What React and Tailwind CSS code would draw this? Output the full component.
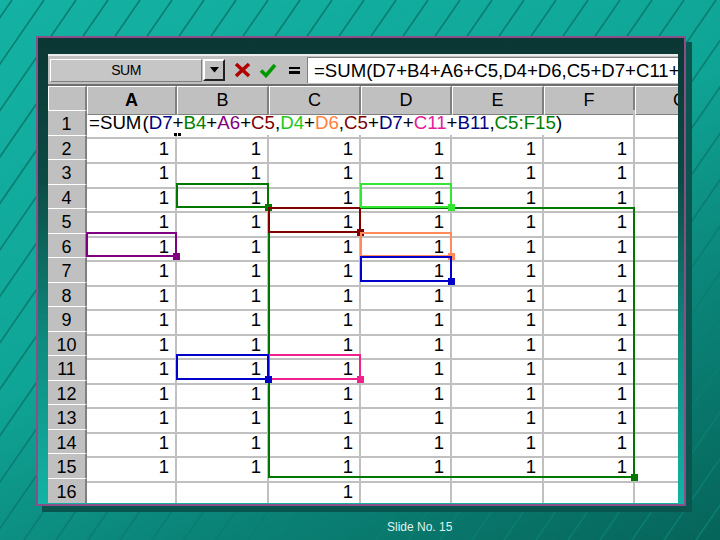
import React from "react";

const colLeft = [0, 39, 129, 221, 313, 404, 496, 587, 678];
const rowTop = (r) => 56 + (r - 1) * 24.5;

const segs = [
  ["=SUM", "text-black"],
  ["CURSOR", ""],
  ["(", "text-black"],
  ["D7", "text-[#000080]"],
  ["+", "text-black"],
  ["B4", "text-[#008000]"],
  ["+", "text-black"],
  ["A6", "text-[#800080]"],
  ["+", "text-black"],
  ["C5", "text-[#800000]"],
  [",", "text-black"],
  ["D4", "text-[#22c822]"],
  ["+", "text-black"],
  ["D6", "text-[#ff8040]"],
  [",", "text-black"],
  ["C5", "text-[#800000]"],
  ["+", "text-black"],
  ["D7", "text-[#000080]"],
  ["+", "text-black"],
  ["C11", "text-[#e0209a]"],
  ["+", "text-black"],
  ["B11", "text-[#000080]"],
  [",", "text-black"],
  ["C5:F15", "text-[#008000]"],
  [")", "text-black"],
];

const boxes = [
  { c1: 3, r1: 5, c2: 6, r2: 15, border: "border-[#007800]", fill: "bg-[#007800]" },
  { c1: 2, r1: 4, c2: 2, r2: 4, border: "border-[#007800]", fill: "bg-[#007800]" },
  { c1: 1, r1: 6, c2: 1, r2: 6, border: "border-[#800080]", fill: "bg-[#800080]" },
  { c1: 3, r1: 5, c2: 3, r2: 5, border: "border-[#800000]", fill: "bg-[#800000]" },
  { c1: 4, r1: 4, c2: 4, r2: 4, border: "border-[#33e633]", fill: "bg-[#33e633]" },
  { c1: 4, r1: 6, c2: 4, r2: 6, border: "border-[#ff8a5c]", fill: "bg-[#ff8a5c]" },
  { c1: 4, r1: 7, c2: 4, r2: 7, border: "border-[#0000c8]", fill: "bg-[#0000c8]" },
  { c1: 3, r1: 11, c2: 3, r2: 11, border: "border-[#f0208c]", fill: "bg-[#f0208c]" },
  { c1: 2, r1: 11, c2: 2, r2: 11, border: "border-[#0000c8]", fill: "bg-[#0000c8]" },
];

function RangeBox({ c1, r1, c2, r2, border, fill }) {
  const left = colLeft[c1] - 1;
  const top = rowTop(r1) - 1;
  const right = colLeft[c2 + 1] - 1;
  const bottom = rowTop(r2 + 1) - 1;
  return (
    <>
      <div
        className={`absolute border-2 pointer-events-none ${border}`}
        style={{ left, top, width: right - left + 1, height: bottom - top + 1 }}
      />
      <div
        className={`absolute w-[7px] h-[7px] ${fill}`}
        style={{ left: right - 3, top: bottom - 3 }}
      />
    </>
  );
}

const letters = ["A", "B", "C", "D", "E", "F", "G"];

function BgLines() {
  const lines = [];
  for (let k = -14; k < 24; k++) {
    const xb = 24 + 32 * k;
    lines.push(
      <line key={k} x1={xb} y1={540} x2={xb + 372} y2={0} stroke="#0b7d71" strokeWidth="1.6" />
    );
  }
  return (
    <svg className="absolute inset-0" width="720" height="540" viewBox="0 0 720 540">
      {lines}
    </svg>
  );
}

export default function App() {
  const rows = Array.from({ length: 16 }, (_, i) => i + 1);
  return (
    <div className="relative w-[720px] h-[540px] overflow-hidden bg-[linear-gradient(155deg,#14b2a4_0%,#0fa596_45%,#0b8579_70%,#06645a_100%)] font-['Liberation_Sans',Arial,sans-serif]">
      <BgLines />
      <div className="relative flex flex-col">
        {/* frame */}
        <div className="ml-[36px] mt-[36px] w-[650px] border-2 border-[#8a4f88] pl-[10px] pr-[6px] pt-[16px] pb-[1px] bg-[linear-gradient(180deg,#0b3733_0%,#0c4a44_30%,#0f8a7e_65%,#13b3a5_100%)] shadow-[6px_6px_0_#0a564e]">
          <div className="relative w-[630px] h-[449px] overflow-hidden bg-white">
            {/* formula bar */}
            <div className="h-[30px] bg-[#c0c0c0] border-t-2 border-[#ececec] flex items-center">
              <div className="ml-[2px] w-[152px] h-[23px] border border-white border-b-[#808080] border-r-[#808080] bg-[#c6c6c6] flex items-center justify-center text-[14px] text-black tracking-[-0.5px]">
                SUM
              </div>
              <div className="ml-[1px] w-[22px] h-[22px] bg-[#c0c0c0] border-2 border-t-white border-l-white border-b-[#202020] border-r-[#202020] flex items-center justify-center">
                <svg width="9" height="6" viewBox="0 0 9 6">
                  <polygon points="0,0 9,0 4.5,5.5" fill="#000" />
                </svg>
              </div>
              <svg className="ml-[9px]" width="17" height="16" viewBox="0 0 17 16">
                <path d="M2 2 L15 14 M15 2 L2 14" stroke="#b00000" strokeWidth="3.6" />
              </svg>
              <svg className="ml-[8px]" width="18" height="16" viewBox="0 0 18 16">
                <polyline points="2,8.5 7,13.5 16,3" fill="none" stroke="#009a00" strokeWidth="3.6" />
              </svg>
              <div className="ml-[12px] w-[11px] flex flex-col gap-[2px]">
                <div className="h-[2.5px] bg-black" />
                <div className="h-[2.5px] bg-black" />
              </div>
              <div className="ml-[7px] h-[26px] flex-1 bg-white border-t border-l border-[#808080] flex items-center pl-[6px] overflow-hidden whitespace-nowrap text-[18.6px] text-black">
                =SUM(D7+B4+A6+C5,D4+D6,C5+D7+C11+B11,C5:F15)
              </div>
            </div>
            {/* header row */}
            <div className="grid grid-cols-[39px_90px_92px_92px_91px_92px_91px_91px] h-[26px] border-t-2 border-[#6e6e6e]">
              <div className="bg-[#c0c0c0] border-l border-t border-white border-r-2 border-r-[#808080] border-b border-b-[#808080]" />
              {letters.map((l, i) => (
                <div
                  key={l}
                  className={`bg-[#c0c0c0] border-l border-t border-white border-r-2 border-r-[#808080] border-b border-b-[#808080] flex items-center justify-center text-[18px] text-black ${i === 0 ? "font-bold" : ""}`}
                >
                  {l}
                </div>
              ))}
            </div>
            {/* rows */}
            {rows.map((r) => (
              <div key={r} className="grid grid-cols-[39px_90px_92px_92px_91px_92px_91px_91px] h-[24.5px]">
                <div className="bg-[#c0c0c0] border-t border-white border-b border-b-[#9a9a9a] border-r-2 border-r-[#808080] flex items-center justify-center text-[18px] text-black">
                  {r}
                </div>
                {letters.map((l, ci) => {
                  if (r === 1) {
                    if (ci === 0) {
                      return (
                        <div key={l} className="relative z-10 border-b-2 border-[#c0c0c0] flex items-center pl-[2px] whitespace-nowrap text-[18.7px] leading-none">
                          {segs.map(([t, c], k) =>
                            t === "CURSOR" ? (
                              <span key={k} className="inline-block w-[1.5px] h-[19px] bg-black mx-[0.5px]" />
                            ) : (
                              <span key={k} className={c}>{t}</span>
                            )
                          )}
                        </div>
                      );
                    }
                    return (
                      <div key={l} className={`border-b-2 border-[#c0c0c0] ${ci >= 5 ? "border-r-2" : ""}`} />
                    );
                  }
                  const has = (r <= 15 && ci <= 5) || (r === 16 && ci === 2);
                  return (
                    <div
                      key={l}
                      className="border-r-2 border-b-2 border-[#c0c0c0] flex items-center justify-end pr-[6px] text-[18.5px] text-black"
                    >
                      {has ? "1" : ""}
                    </div>
                  );
                })}
              </div>
            ))}
            {/* A1 fill handle marks */}
            <div className="absolute left-[126px] top-[79px] flex gap-[1px]">
              <div className="w-[3px] h-[3px] bg-black" />
              <div className="w-[3px] h-[3px] bg-black" />
            </div>
            {boxes.map((b, i) => (
              <RangeBox key={i} {...b} />
            ))}
          </div>
        </div>
        <div className="mt-[14px] pl-[387px] text-[12px] leading-[14px] text-[#dff2ee]">Slide No. 15</div>
      </div>
    </div>
  );
}
